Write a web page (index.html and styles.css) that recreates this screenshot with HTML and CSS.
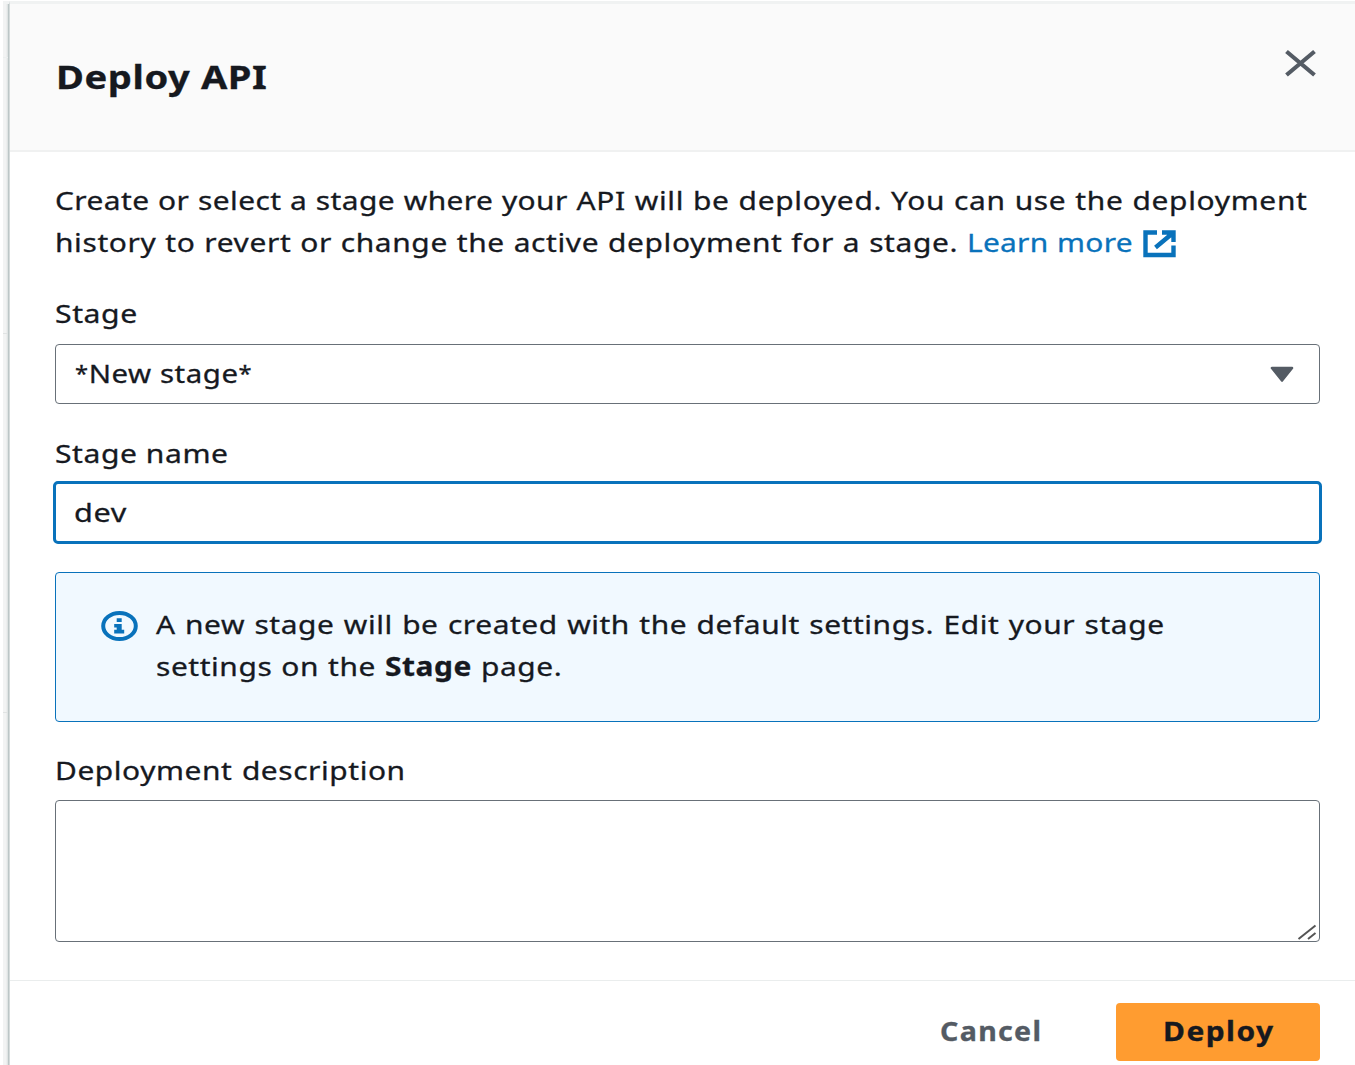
FILE: index.html
```html
<!DOCTYPE html>
<html lang="en">
<head>
<meta charset="utf-8">
<title>Deploy API</title>
<link rel="stylesheet" href="styles.css">
</head>
<body>
<div class="backdrop">
  <div class="edge"><i></i><i></i><i></i></div>
  <section class="modal">
    <header class="modal-header">
      <h1><span class="t t-title">Deploy API</span></h1>
      <svg class="close" width="32" height="28" viewBox="0 0 32 28"><path d="M1.500 2.500L29.500 26M29.500 2.500L1.500 26" fill="none" stroke="#545b64" stroke-width="4.2"/></svg>
    </header>
    <div class="modal-body">
      <div class="intro">
        <div class="line"><span class="t t-intro1"><span class="tight">Create or select a stage where your </span>API will be deployed. You can use the deployment</span></div>
        <div class="line"><span class="t t-intro2">history to revert or change the active deployment for a stage. <a>Learn more</a></span></div>
        <svg class="external" width="34" height="28" viewBox="0 0 34 28"><path d="M14 2.500H2.500V25H30.500V15.500M19 2.500H30.500V12M30.500 2.500L12.500 17.500" fill="none" stroke="#0972bb" stroke-width="4.4"/></svg>
      </div>
      <label class="label label-stage"><span class="t t-stage">Stage</span></label>
      <div class="field select"><span class="t t-new"><span class="star">*</span>New stage<span class="star">*</span></span><svg width="24" height="17" viewBox="0 0 24 17"><path d="M2 2H22L12 14.500Z" fill="#545b64" stroke="#545b64" stroke-width="2.600" stroke-linejoin="round"/></svg></div>
      <label class="label label-name"><span class="t t-name">Stage name</span></label>
      <div class="field focused"><span class="t t-dev">dev</span></div>
      <div class="alert">
        <svg width="38" height="32" viewBox="0 0 38 32"><ellipse cx="18.500" cy="16" rx="16.300" ry="13.100" fill="none" stroke="#0972bb" stroke-width="4"/><path d="M15.700 8.300H20.700V12H15.700ZM13.200 14H20.700V19.700H23.200V23.500H13.200V19.700H15.700V17.500H13.200Z" fill="#0972bb"/></svg>
        <div class="alert-text">
          <div class="line"><span class="t t-alert1">A new stage will be created with the default settings. Edit your stage</span></div>
          <div class="line"><span class="t t-alert2">settings on the <b>Stage</b> page.</span></div>
        </div>
      </div>
      <label class="label label-desc"><span class="t t-desc">Deployment description</span></label>
      <div class="textarea"><svg width="20" height="17" viewBox="0 0 20 17"><path d="M1.500 15L18.500 1.500M11 15L18.500 9" fill="none" stroke="#555" stroke-width="2"/></svg></div>
    </div>
    <footer class="modal-footer">
      <div class="cancel"><span class="t t-cancel">Cancel</span></div>
      <div class="deploy"><span class="t t-deploy">Deploy</span></div>
    </footer>
  </section>
</div>
</body>
</html>
```
FILE: styles.css
```css
* { box-sizing: border-box; }
body { margin: 0; width: 1355px; height: 1065px; overflow: hidden; background: #fff; color: #16191f; font: 26px/42px "Noto Sans", sans-serif; }
svg { display: block; flex: none; }
.backdrop { display: flex; height: 1065px; padding-left: 3px; border-top: 1px solid #fff; }
.edge { width: 6px; flex: none; background: linear-gradient(90deg, #f2f3f3 0 3px, #e0e4e4 4.5px, #aab7b8 6px); border-top: 3px solid #f1f3f3; }
.edge i { display: block; height: 1px; width: 5px; background: #e0e3e3; }
.edge i:nth-child(1) { margin-top: 53px; background: #ecefef; }
.edge i:nth-child(2) { margin-top: 275px; }
.edge i:nth-child(3) { margin-top: 378px; }
.modal { flex: 1; min-width: 0; border-top: 3px solid #f0f2f2; border-left: 1px solid #d5dbdb; background: #fff; }
.modal-header { display: flex; justify-content: space-between; height: 148px; padding: 45px 38px 0 46px; background: #fafafa; border-bottom: 2px solid #f0f1f1; }
h1 { margin: 0; padding-top: 7px; font-size: 33px; line-height: 42px; font-weight: 700; }
.modal-body { padding: 27px 35px 0 45px; height: 828px; }
.t { display: inline-block; white-space: nowrap; letter-spacing: .5px; transform-origin: 0 50%; transform: scaleX(var(--sx)); -webkit-text-stroke: .3px; }
.line { height: 42px; }
.intro { position: relative; height: 84px; }
.external { position: absolute; left: 1088px; top: 51px; }
a { color: #0972bb; letter-spacing: .25px; }
.label { display: block; height: 42px; }
.label-stage { margin-top: 29px; }
.label-name { margin-top: 28px; }
.label-desc { margin-top: 27px; }
.field { display: flex; justify-content: space-between; align-items: center; height: 60px; margin-top: 10px; padding: 0 25px 2px 19px; border: 1.5px solid #687078; border-radius: 4px; }
.select { margin-top: 10px; }
.select svg { margin-top: 2px; }
.star { font-size: 21px; line-height: 20px; vertical-align: 2px; }
.field.focused { height: 63px; margin: 7px -2px 0; padding: 0 18px 1px; border: 3px solid #0972bb; border-radius: 5px; }
.alert { display: flex; gap: 17px; height: 150px; margin-top: 28px; padding: 31px 0 0 45px; background: #f1f9ff; border: 1.5px solid #0972bb; border-radius: 4px; }
.alert > svg { margin-top: 6px; }
.alert-text { margin-top: -1px; }
.textarea { display: flex; align-items: flex-end; justify-content: flex-end; height: 142px; margin-top: 9px; padding: 0 2px 0 0; border: 1.5px solid #687078; border-radius: 4px; }
.modal-footer { display: flex; justify-content: flex-end; gap: 73px; height: 85px; padding: 22px 35px 0 0; border-top: 1px solid #eaeded; font-weight: 700; }
.cancel { width: 103px; padding-top: 7px; color: #545b64; }
.deploy { width: 204px; height: 58px; padding: 7px 0 0 47px; border-radius: 4px; background: #ff9c30; }
.t-title { --sx: 1.155; }
.t-intro1 { --sx: 1.15; letter-spacing: .6px; word-spacing: .4px; }
.tight { letter-spacing: .36px; }
.t-intro2 { --sx: 1.15; letter-spacing: .55px; word-spacing: .4px; }
.t-stage { --sx: 1.16; }
.t-new { --sx: 1.13; }
.t-name { --sx: 1.155; }
.t-dev { --sx: 1.18; }
.t-alert1 { --sx: 1.15; word-spacing: .9px; }
.t-alert2 { --sx: 1.15; word-spacing: .6px; }
.t-desc { --sx: 1.15; word-spacing: 1px; }
.t-cancel { --sx: 1.1; letter-spacing: 1.2px; }
.t-deploy { --sx: 1.15; letter-spacing: 1.3px; }
```
